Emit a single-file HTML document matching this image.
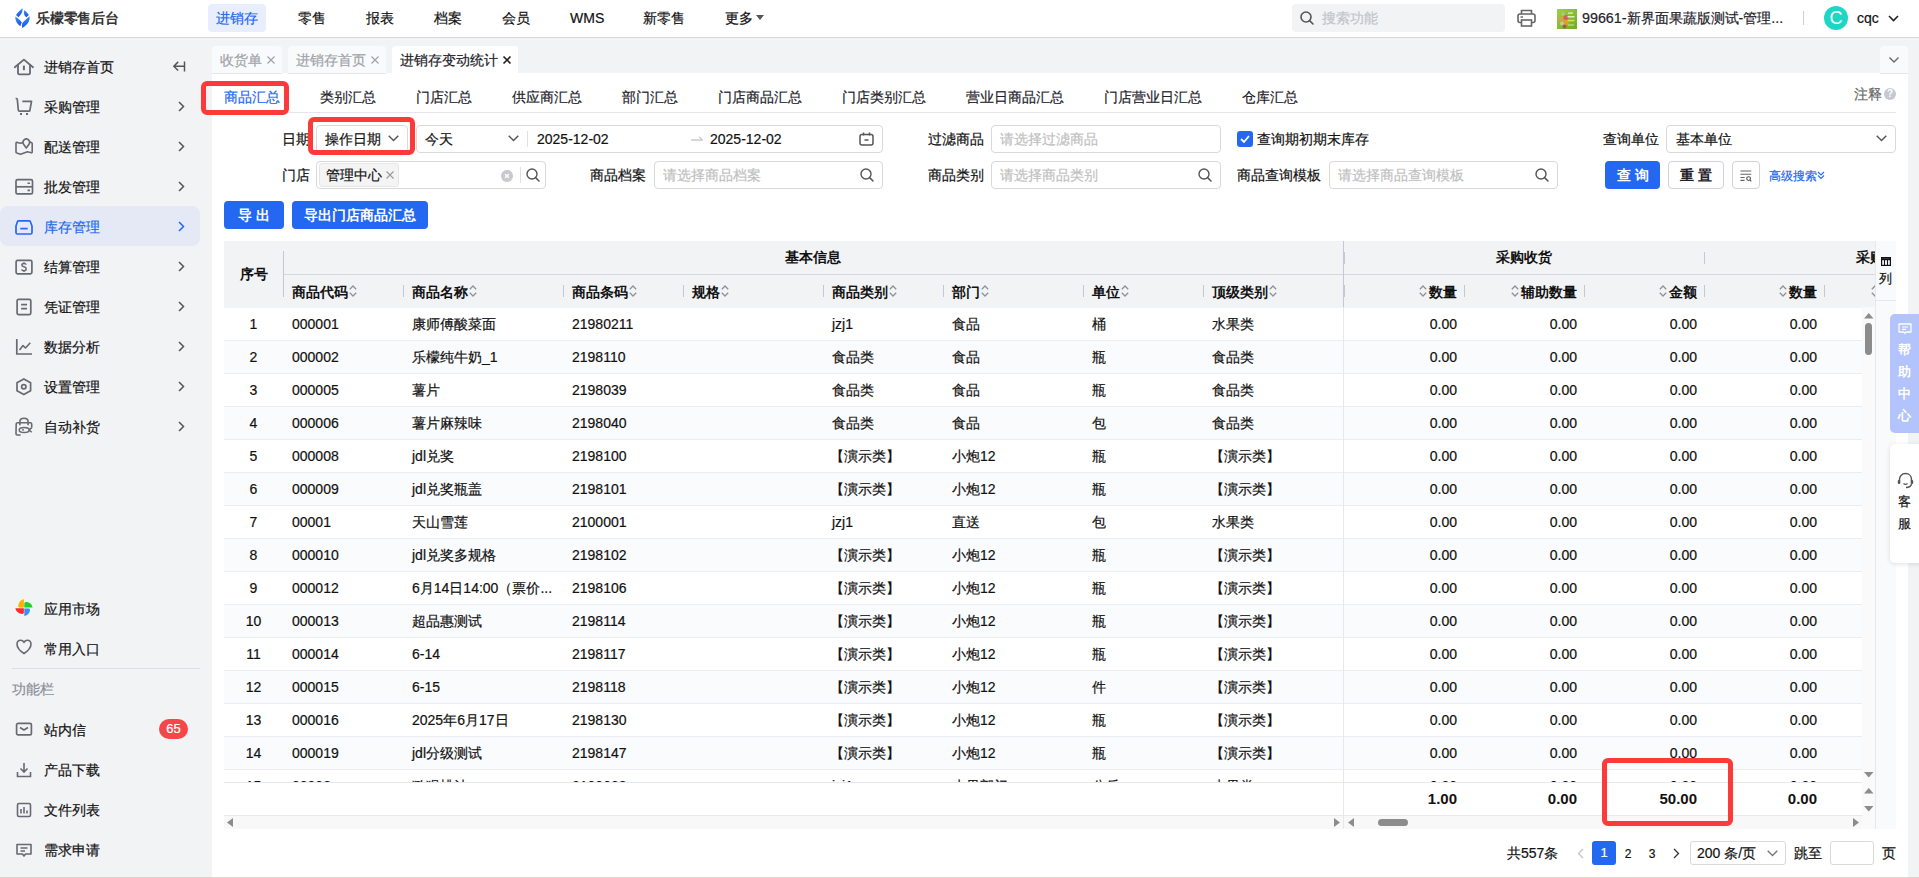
<!DOCTYPE html><html><head><meta charset="utf-8"><style>
*{box-sizing:border-box;margin:0;padding:0}
html,body{width:1919px;height:878px;overflow:hidden}
body{position:relative;background:#f2f3f5;font-family:"Liberation Sans",sans-serif;font-size:14px;color:#111;-webkit-text-stroke-width:0.2px}
.ab{position:absolute}
.t{position:absolute;white-space:nowrap;line-height:20px;height:20px}
svg{position:absolute;overflow:visible}
.ipt{position:absolute;height:28px;border:1px solid #d9d9d9;border-radius:4px;background:#fff}
.ph{color:#bfbfbf}
.row{position:absolute;left:0;height:33px;border-bottom:1px solid #ebeef2}
.th{font-weight:bold;color:#111;-webkit-text-stroke-width:0}
.sort{position:absolute;width:8px;height:12px}
.dv{position:absolute;width:1px;height:12px;background:#c5c8d2}
</style></head><body>
<div class="ab" style="left:0;top:0;width:1919px;height:38px;background:#fff;border-bottom:1px solid #d8d8d8"></div>
<svg style="left:15px;top:7.7px" width="15" height="21" viewBox="0 0 15 21">
<defs><linearGradient id="lg" x1="0" y1="0" x2="0.3" y2="1"><stop offset="0" stop-color="#3d93f9"/><stop offset="1" stop-color="#1657ef"/></linearGradient></defs>
<path d="M7.6 0.3C7.9 3.5 6.2 7 3.4 9.3L1 7C3 4.3 5.3 2.3 7.6 0.3Z" fill="url(#lg)"/>
<path d="M9.3 2.1C11 3.6 12.6 5.2 13.9 7L11.4 9.3C9.4 8 8.3 6 9.3 2.1Z" fill="url(#lg)"/>
<path d="M0.3 8.5C2.8 10.2 5.2 12.2 6.9 14.6C6 15.8 5.6 17 5.5 18.3C2.6 16.2 0.2 13.5 0.3 8.5Z" fill="url(#lg)"/>
<path d="M14.6 8.3C15.2 13.6 11.7 17.5 7.3 20.1C6.8 18.5 6.8 17 7.1 15.5C8.6 13.3 11.2 11.3 14.6 8.3Z" fill="url(#lg)"/>
</svg>
<div class="t" style="left:36px;top:8px;font-size:14px;font-weight:bold;-webkit-text-stroke-width:0;color:#333;letter-spacing:-0.2px">乐檬零售后台</div>
<div class="ab" style="left:208px;top:4px;width:58px;height:28px;border-radius:4px;background:#e8eefd"></div>
<div class="t" style="left:216px;top:8px;color:#2468f2">进销存</div>
<div class="t" style="left:298px;top:8px;color:#111">零售</div>
<div class="t" style="left:366px;top:8px;color:#111">报表</div>
<div class="t" style="left:434px;top:8px;color:#111">档案</div>
<div class="t" style="left:502px;top:8px;color:#111">会员</div>
<div class="t" style="left:570px;top:8px;color:#111">WMS</div>
<div class="t" style="left:643px;top:8px;color:#111">新零售</div>
<div class="t" style="left:725px;top:8px;color:#111">更多</div>
<svg style="left:756px;top:15px" width="8" height="5"><path d="M0 0H8L4 5Z" fill="#555"/></svg>
<div class="ab" style="left:1292px;top:4px;width:213px;height:28px;border-radius:4px;background:#f2f3f5"></div>
<svg style="left:1300px;top:11px" width="14" height="14" viewBox="0 0 14 14"><circle cx="6" cy="6" r="5" fill="none" stroke="#555" stroke-width="1.6"/><path d="M9.6 9.6L13 13" stroke="#555" stroke-width="1.6" stroke-linecap="round"/></svg>
<div class="t ph" style="left:1322px;top:8px;color:#c0c4cc">搜索功能</div>
<svg style="left:1517px;top:9px" width="19" height="18" viewBox="0 0 19 18"><path d="M4.5 5V1.5H14.5V5" fill="none" stroke="#666" stroke-width="1.6"/><rect x="1" y="5" width="17" height="8.5" rx="2" fill="none" stroke="#666" stroke-width="1.6"/><rect x="4.5" y="11" width="10" height="6" fill="#fff" stroke="#666" stroke-width="1.6"/><path d="M3.5 8H6" stroke="#666" stroke-width="1.4"/></svg>
<svg style="left:1557px;top:9px" width="20" height="20" viewBox="0 0 20 20"><defs><linearGradient id="sg" x1="0" y1="0" x2="1" y2="1"><stop offset="0" stop-color="#9fcf48"/><stop offset="1" stop-color="#6eaa2c"/></linearGradient><filter id="bl"><feGaussianBlur stdDeviation="0.6"/></filter><clipPath id="sc"><rect width="20" height="20"/></clipPath></defs><rect width="20" height="20" fill="url(#sg)"/>
<g clip-path="url(#sc)"><g filter="url(#bl)" opacity="0.9"><circle cx="4.5" cy="10" r="2.6" fill="#e0a040"/><circle cx="9" cy="8.5" r="2.6" fill="#d85a5a"/><circle cx="9" cy="13.5" r="2.8" fill="#eb9a2e"/><circle cx="5" cy="14.5" r="2" fill="#d8c8a0"/><circle cx="7.5" cy="17.5" r="2" fill="#a05a3a"/><circle cx="6" cy="5" r="1.8" fill="#b8c890"/>
<rect x="11" y="3.5" width="5" height="1.2" fill="#f0f8e0"/><rect x="10.5" y="7" width="7" height="1.5" fill="#e8f4d0"/><rect x="10.5" y="10.8" width="7" height="1.5" fill="#d8f040"/><rect x="11" y="15.5" width="6" height="1" fill="#d8ecb8"/></g></g></svg>
<div class="t" style="left:1582px;top:8px;color:#1d2129;font-size:14.3px">99661-新界面果蔬版测试-管理...</div>
<div class="ab" style="left:1803px;top:11px;width:1px;height:14px;background:#d0d0d0"></div>
<div class="ab" style="left:1824px;top:6px;width:24px;height:24px;border-radius:12px;background:#1ed6c6"></div>
<div class="t" style="left:1824px;top:6px;width:24px;height:24px;line-height:24px;text-align:center;color:#fff;font-size:18px;-webkit-text-stroke-width:0">C</div>
<div class="t" style="left:1857px;top:8px;font-size:14px;color:#111">cqc</div>
<svg style="left:1888px;top:15px" width="11" height="7"><path d="M1 1L5.5 5.5L10 1" fill="none" stroke="#222" stroke-width="1.6"/></svg>
<div class="ab" style="left:0;top:206px;width:200px;height:40px;border-radius:8px;background:#e5e9f5"></div>
<svg style="left:15px;top:58px" width="18" height="18" viewBox="0 0 18 18"><path d="M-0.2 9.2L8.9 1.6L18 9.2" fill="none" stroke="#666a73" stroke-width="1.8" stroke-linejoin="round" stroke-linecap="round"/><path d="M3 6.8V14.8Q3 16.4 4.6 16.4H13.4Q15 16.4 15 14.8V6.8" fill="none" stroke="#666a73" stroke-width="1.8"/><path d="M8.9 7.6V12.2" stroke="#666a73" stroke-width="2"/></svg>
<div class="t" style="left:44px;top:57px;color:#111">进销存首页</div>
<svg style="left:173px;top:60.5px" width="13" height="11" viewBox="0 0 13 11"><path d="M11.5 0.5V10.5" stroke="#555" stroke-width="1.5"/><path d="M0.8 5.2H11 M5.2 0.9L0.8 5.2L5.2 9.5" fill="none" stroke="#555" stroke-width="1.5" stroke-linejoin="round"/></svg>
<svg style="left:15px;top:98px" width="18" height="18" viewBox="0 0 18 18"><path d="M0.6 0.5H1.5Q2.2 0.5 2.3 1.3L3.3 12Q3.4 13.1 4.5 13.1H14Q14.8 13.1 14.9 12.3L16.5 3.4H7.3" fill="none" stroke="#666a73" stroke-width="1.7" stroke-linejoin="round"/><rect x="5" y="15" width="2" height="2" fill="#666a73"/><rect x="11" y="15" width="2" height="2" fill="#666a73"/></svg>
<div class="t" style="left:44px;top:97px;color:#111">采购管理</div>
<svg style="left:177.5px;top:101px" width="7" height="11" viewBox="0 0 7 11"><path d="M1 1L5.5 5.5L1 10" fill="none" stroke="#555" stroke-width="1.5"/></svg>
<svg style="left:15px;top:138px" width="18" height="18" viewBox="0 0 18 18"><path d="M8 4.6L5.5 5.3L2.3 4.4Q1 4.1 1 5.4V14Q1 14.8 1.8 15.1L5.5 16.2L12.5 13.8L16.2 14.7Q17.2 14.9 17.2 13.9V5.5Q17.2 4.7 16.3 4.4L14.8 4" fill="none" stroke="#666a73" stroke-width="1.6" stroke-linejoin="round"/><path d="M11.3 10L8.6 6.2A3.3 3.3 0 1 1 14 6.2Z" fill="none" stroke="#666a73" stroke-width="1.6" stroke-linejoin="round"/></svg>
<div class="t" style="left:44px;top:137px;color:#111">配送管理</div>
<svg style="left:177.5px;top:141px" width="7" height="11" viewBox="0 0 7 11"><path d="M1 1L5.5 5.5L1 10" fill="none" stroke="#555" stroke-width="1.5"/></svg>
<svg style="left:15px;top:178px" width="18" height="18" viewBox="0 0 18 18"><rect x="1" y="1.7" width="16.5" height="14.2" rx="1.5" fill="none" stroke="#666a73" stroke-width="1.7"/><path d="M1 8.8H17.5" stroke="#666a73" stroke-width="1.7"/><path d="M12.5 5.2H15 M12.5 12.4H15" stroke="#666a73" stroke-width="1.6"/></svg>
<div class="t" style="left:44px;top:177px;color:#111">批发管理</div>
<svg style="left:177.5px;top:181px" width="7" height="11" viewBox="0 0 7 11"><path d="M1 1L5.5 5.5L1 10" fill="none" stroke="#555" stroke-width="1.5"/></svg>
<svg style="left:15px;top:218px" width="18" height="18" viewBox="0 0 18 18"><path d="M3.6 2.8H14.2Q15 2.8 15.3 3.5L17 8V14.6Q17 16 15.6 16H2.4Q1 16 1 14.6V8L2.5 3.5Q2.8 2.8 3.6 2.8Z" fill="none" stroke="#2468f2" stroke-width="1.7" stroke-linejoin="round"/><path d="M5.3 10.6H12.7" stroke="#2468f2" stroke-width="1.7"/></svg>
<div class="t" style="left:44px;top:217px;color:#2468f2">库存管理</div>
<svg style="left:177.5px;top:221px" width="7" height="11" viewBox="0 0 7 11"><path d="M1 1L5.5 5.5L1 10" fill="none" stroke="#2468f2" stroke-width="1.5"/></svg>
<svg style="left:15px;top:258px" width="18" height="18" viewBox="0 0 18 18"><rect x="1.1" y="2.4" width="15.8" height="13.4" rx="1.5" fill="none" stroke="#666a73" stroke-width="1.7"/><path d="M11.2 6.6Q10.9 5.4 9 5.4Q6.9 5.4 6.9 6.9Q6.9 8.3 9 8.8Q11.2 9.4 11.2 11Q11.2 12.7 9 12.7Q6.9 12.7 6.7 11.4 M9 4.2V5.4 M9 12.7V14" fill="none" stroke="#666a73" stroke-width="1.5"/></svg>
<div class="t" style="left:44px;top:257px;color:#111">结算管理</div>
<svg style="left:177.5px;top:261px" width="7" height="11" viewBox="0 0 7 11"><path d="M1 1L5.5 5.5L1 10" fill="none" stroke="#555" stroke-width="1.5"/></svg>
<svg style="left:15px;top:298px" width="18" height="18" viewBox="0 0 18 18"><rect x="2.1" y="1.3" width="13.7" height="15.3" rx="1.5" fill="none" stroke="#666a73" stroke-width="1.7"/><path d="M6.1 6.6H12 M6.1 10.6H12" stroke="#666a73" stroke-width="1.7"/></svg>
<div class="t" style="left:44px;top:297px;color:#111">凭证管理</div>
<svg style="left:177.5px;top:301px" width="7" height="11" viewBox="0 0 7 11"><path d="M1 1L5.5 5.5L1 10" fill="none" stroke="#555" stroke-width="1.5"/></svg>
<svg style="left:15px;top:338px" width="18" height="18" viewBox="0 0 18 18"><path d="M1.8 1V16H17" fill="none" stroke="#666a73" stroke-width="1.7"/><path d="M4.5 12L8 7.6L10.5 10L15.3 4.8" fill="none" stroke="#666a73" stroke-width="1.6" stroke-linejoin="round"/></svg>
<div class="t" style="left:44px;top:337px;color:#111">数据分析</div>
<svg style="left:177.5px;top:341px" width="7" height="11" viewBox="0 0 7 11"><path d="M1 1L5.5 5.5L1 10" fill="none" stroke="#555" stroke-width="1.5"/></svg>
<svg style="left:15px;top:378px" width="18" height="18" viewBox="0 0 18 18"><path d="M8.8 0.9L15.6 4.8V12.7L8.8 16.6L2 12.7V4.8Z" fill="none" stroke="#666a73" stroke-width="1.7" stroke-linejoin="round"/><circle cx="8.8" cy="8.75" r="2.2" fill="none" stroke="#666a73" stroke-width="1.7"/></svg>
<div class="t" style="left:44px;top:377px;color:#111">设置管理</div>
<svg style="left:177.5px;top:381px" width="7" height="11" viewBox="0 0 7 11"><path d="M1 1L5.5 5.5L1 10" fill="none" stroke="#555" stroke-width="1.5"/></svg>
<svg style="left:15px;top:418px" width="18" height="18" viewBox="0 0 18 18"><path d="M4.9 7.3V3.6Q4.9 0.2 9 0.2Q13.1 0.2 13.1 3.6V7.3" fill="none" stroke="#666a73" stroke-width="1.6"/><path d="M5.6 17H2.2Q1 17 1 15.8L1.2 6Q1.2 4.7 2.5 4.7H15.3Q16.7 4.7 16.7 6V9.8" fill="none" stroke="#666a73" stroke-width="1.6" stroke-linejoin="round"/><ellipse cx="9.2" cy="11.9" rx="5" ry="2.5" fill="none" stroke="#666a73" stroke-width="1.5"/><path d="M14 11.9L16.7 9.8 M14 11.9L16.7 14.2" stroke="#666a73" stroke-width="1.5"/><path d="M8 11V12.8" stroke="#666a73" stroke-width="1.5"/></svg>
<div class="t" style="left:44px;top:417px;color:#111">自动补货</div>
<svg style="left:177.5px;top:421px" width="7" height="11" viewBox="0 0 7 11"><path d="M1 1L5.5 5.5L1 10" fill="none" stroke="#555" stroke-width="1.5"/></svg>
<svg style="left:15px;top:598px" width="18" height="19" viewBox="0 0 18 19">
<path d="M8.9 9.6L8.9 1.2C5.8 1.8 3.3 4.6 3.3 8C3.3 9 3.9 9.6 4.9 9.6Z" fill="#ffb000"/>
<path d="M9.3 9.6L17.6 9.6C17.1 6.5 14.5 4 11 4.1C10 4.1 9.3 4.8 9.3 6Z" fill="#22d32a"/>
<path d="M9.3 10.4L9.3 18.1C12.2 17.6 15 15 15 11.5C15 10.8 14.4 10.4 13.6 10.4Z" fill="#3592fb"/>
<path d="M8.9 10.2L0.4 10.2C1 13.5 4 15.9 7.5 15.9C8.5 15.9 8.9 15.1 8.9 14.1Z" fill="#ff2929"/>
</svg>
<div class="t" style="left:44px;top:599px">应用市场</div>
<svg style="left:15px;top:638px" width="18" height="18" viewBox="0 0 18 18"><path d="M9 15.5C9 15.5 2 11 2 6.3C2 3.8 3.8 2.3 5.8 2.3C7.3 2.3 8.4 3.2 9 4.3C9.6 3.2 10.7 2.3 12.2 2.3C14.2 2.3 16 3.8 16 6.3C16 11 9 15.5 9 15.5Z" fill="none" stroke="#666a73" stroke-width="1.6" stroke-linejoin="round"/></svg>
<div class="t" style="left:44px;top:639px">常用入口</div>
<div class="ab" style="left:12px;top:668px;width:188px;height:1px;background:#dcdee3"></div>
<div class="t" style="left:12px;top:679px;color:#8a8e99">功能栏</div>
<svg style="left:15px;top:720.5px" width="18" height="18" viewBox="0 0 18 18"><rect x="1.6" y="2.3" width="14.8" height="11.6" rx="1.5" fill="none" stroke="#666a73" stroke-width="1.7"/><path d="M5 6.5L9 9L13 6.5" fill="none" stroke="#666a73" stroke-width="1.7"/></svg>
<div class="t" style="left:44px;top:720px">站内信</div>
<svg style="left:15px;top:760.5px" width="18" height="18" viewBox="0 0 18 18"><path d="M9 2V11 M5.5 7.5L9 11L12.5 7.5" fill="none" stroke="#666a73" stroke-width="1.6"/><path d="M2.5 11V15.5H15.5V11" fill="none" stroke="#666a73" stroke-width="1.6"/></svg>
<div class="t" style="left:44px;top:760px">产品下载</div>
<svg style="left:15px;top:800.5px" width="18" height="18" viewBox="0 0 18 18"><rect x="2.5" y="2.5" width="13" height="13" rx="1.5" fill="none" stroke="#666a73" stroke-width="1.6"/><path d="M6 8V12.5 M9 6V12.5 M12 9.5V12.5" stroke="#666a73" stroke-width="1.6"/></svg>
<div class="t" style="left:44px;top:800px">文件列表</div>
<svg style="left:15px;top:840.5px" width="18" height="18" viewBox="0 0 18 18"><path d="M2 3.5H16V13H10.5L9 15L7.5 13H2Z" fill="none" stroke="#666a73" stroke-width="1.6" stroke-linejoin="round"/><path d="M5.5 7H12.5 M5.5 10H10" stroke="#666a73" stroke-width="1.6"/></svg>
<div class="t" style="left:44px;top:840px">需求申请</div>
<div class="ab" style="left:159px;top:719px;width:29px;height:20px;border-radius:10px;background:#f5474a;color:#fff;font-size:13px;line-height:20px;text-align:center">65</div>
<div class="ab" style="left:212px;top:73px;width:1696px;height:804px;background:#fff"></div>
<div class="ab" style="left:212px;top:46px;width:70px;height:28px;background:#f9fafb;border-radius:4px 4px 0 0;border-bottom:1px solid #e5e6eb;"></div>
<div class="t" style="left:220px;top:50px;color:#a0a3aa">收货单</div>
<svg style="left:267px;top:56px" width="8" height="8" viewBox="0 0 8 8"><path d="M0.5 0.5L7.5 7.5M7.5 0.5L0.5 7.5" stroke="#a0a3aa" stroke-width="1.2"/></svg>
<div class="ab" style="left:288px;top:46px;width:98px;height:28px;background:#f9fafb;border-radius:4px 4px 0 0;border-bottom:1px solid #e5e6eb;"></div>
<div class="t" style="left:296px;top:50px;color:#a0a3aa">进销存首页</div>
<svg style="left:371px;top:56px" width="8" height="8" viewBox="0 0 8 8"><path d="M0.5 0.5L7.5 7.5M7.5 0.5L0.5 7.5" stroke="#a0a3aa" stroke-width="1.2"/></svg>
<div class="ab" style="left:392px;top:46px;width:126px;height:28px;background:#fff;border-radius:4px 4px 0 0;"></div>
<div class="t" style="left:400px;top:50px;color:#1d2129">进销存变动统计</div>
<svg style="left:503px;top:56px" width="8" height="8" viewBox="0 0 8 8"><path d="M0.5 0.5L7.5 7.5M7.5 0.5L0.5 7.5" stroke="#222" stroke-width="1.6"/></svg>
<div class="ab" style="left:1880px;top:46px;width:28px;height:28px;background:#f9fafb;border-radius:4px 4px 0 0;border-bottom:1px solid #e5e6eb"></div>
<svg style="left:1889px;top:57px" width="10" height="6"><path d="M0.5 0.5L5 5L9.5 0.5" fill="none" stroke="#666" stroke-width="1.3"/></svg>
<div class="ab" style="left:0;top:877px;width:1919px;height:1px;background:#dcd6cf"></div>
<div class="ab" style="left:224px;top:112px;width:1672px;height:1px;background:#e5e6eb"></div>
<div class="t" style="left:224px;top:87px;color:#2468f2">商品汇总</div>
<div class="t" style="left:320px;top:87px;color:#1d2129">类别汇总</div>
<div class="t" style="left:416px;top:87px;color:#1d2129">门店汇总</div>
<div class="t" style="left:512px;top:87px;color:#1d2129">供应商汇总</div>
<div class="t" style="left:622px;top:87px;color:#1d2129">部门汇总</div>
<div class="t" style="left:718px;top:87px;color:#1d2129">门店商品汇总</div>
<div class="t" style="left:842px;top:87px;color:#1d2129">门店类别汇总</div>
<div class="t" style="left:966px;top:87px;color:#1d2129">营业日商品汇总</div>
<div class="t" style="left:1104px;top:87px;color:#1d2129">门店营业日汇总</div>
<div class="t" style="left:1242px;top:87px;color:#1d2129">仓库汇总</div>
<div class="t" style="left:1854px;top:84px;color:#666">注释</div>
<div class="ab" style="left:1884px;top:88px;width:12px;height:12px;border-radius:6px;background:#c5c8d0;color:#fff;font-size:10px;line-height:12px;text-align:center;font-weight:bold;-webkit-text-stroke-width:0">?</div>
<div class="t" style="left:282px;top:129px">日期</div>
<div class="ipt" style="left:316px;top:125px;width:92px"></div>
<div class="t" style="left:325px;top:129px">操作日期</div>
<svg style="left:388px;top:135px" width="11" height="7" viewBox="0 0 11 7"><path d="M0.7 0.7L5.5 5.5L10.3 0.7" fill="none" stroke="#555" stroke-width="1.4"/></svg>
<div class="ipt" style="left:416px;top:125px;width:467px"></div>
<div class="t" style="left:425px;top:129px">今天</div>
<svg style="left:508px;top:135px" width="11" height="7" viewBox="0 0 11 7"><path d="M0.7 0.7L5.5 5.5L10.3 0.7" fill="none" stroke="#555" stroke-width="1.4"/></svg>
<div class="ab" style="left:527px;top:131px;width:1px;height:16px;background:#e0e0e0"></div>
<div class="t" style="left:537px;top:129px">2025-12-02</div>
<svg style="left:691px;top:136px" width="12" height="5"><path d="M0 4H11.5L8 0.8" fill="none" stroke="#b0b0b0" stroke-width="1"/></svg>
<div class="t" style="left:710px;top:129px">2025-12-02</div>
<svg style="left:859px;top:132px" width="15" height="14" viewBox="0 0 15 14"><rect x="1" y="2.5" width="13" height="10.5" rx="2" fill="none" stroke="#555" stroke-width="1.5"/><path d="M4.5 0.5V3.5 M10.5 0.5V3.5 M5.5 8H9.5" stroke="#555" stroke-width="1.5"/></svg>
<div class="t" style="left:928px;top:129px">过滤商品</div>
<div class="ipt" style="left:991px;top:125px;width:230px"></div>
<div class="t ph" style="left:1000px;top:129px">请选择过滤商品</div>
<div class="ab" style="left:1237px;top:131px;width:16px;height:16px;border-radius:3px;background:#2468f2"></div>
<svg style="left:1240px;top:135px" width="10" height="8" viewBox="0 0 10 8"><path d="M1 4L4 7L9 1" fill="none" stroke="#fff" stroke-width="1.8"/></svg>
<div class="t" style="left:1257px;top:129px">查询期初期末库存</div>
<div class="t" style="left:1603px;top:129px">查询单位</div>
<div class="ipt" style="left:1666px;top:125px;width:230px"></div>
<div class="t" style="left:1676px;top:129px">基本单位</div>
<svg style="left:1876px;top:135px" width="11" height="7" viewBox="0 0 11 7"><path d="M0.7 0.7L5.5 5.5L10.3 0.7" fill="none" stroke="#555" stroke-width="1.4"/></svg>
<div class="t" style="left:282px;top:165px">门店</div>
<div class="ipt" style="left:316px;top:161px;width:230px"></div>
<div class="ab" style="left:319px;top:163px;width:80px;height:24px;border-radius:3px;background:#f4f4f5;border:1px solid #e6e6e8"></div>
<div class="t" style="left:326px;top:165px">管理中心</div>
<svg style="left:386px;top:171px" width="8" height="8" viewBox="0 0 8 8"><path d="M0.5 0.5L7.5 7.5M7.5 0.5L0.5 7.5" stroke="#999" stroke-width="1.1"/></svg>
<svg style="left:501px;top:170px" width="12" height="12" viewBox="0 0 12 12"><circle cx="6" cy="6" r="6" fill="#c8c9cc"/><path d="M4 4L8 8M8 4L4 8" stroke="#fff" stroke-width="1.2"/></svg>
<div class="ab" style="left:520px;top:167px;width:1px;height:16px;background:#e0e0e0"></div>
<svg style="left:526px;top:168px" width="14" height="14" viewBox="0 0 14 14"><circle cx="6" cy="6" r="5" fill="none" stroke="#555" stroke-width="1.4"/><path d="M9.6 9.6L13 13" stroke="#555" stroke-width="1.5" stroke-linecap="round"/></svg>
<div class="t" style="left:590px;top:165px">商品档案</div>
<div class="ipt" style="left:654px;top:161px;width:229px"></div>
<div class="t ph" style="left:663px;top:165px">请选择商品档案</div>
<svg style="left:860px;top:168px" width="14" height="14" viewBox="0 0 14 14"><circle cx="6" cy="6" r="5" fill="none" stroke="#555" stroke-width="1.4"/><path d="M9.6 9.6L13 13" stroke="#555" stroke-width="1.5" stroke-linecap="round"/></svg>
<div class="t" style="left:928px;top:165px">商品类别</div>
<div class="ipt" style="left:991px;top:161px;width:230px"></div>
<div class="t ph" style="left:1000px;top:165px">请选择商品类别</div>
<svg style="left:1198px;top:168px" width="14" height="14" viewBox="0 0 14 14"><circle cx="6" cy="6" r="5" fill="none" stroke="#555" stroke-width="1.4"/><path d="M9.6 9.6L13 13" stroke="#555" stroke-width="1.5" stroke-linecap="round"/></svg>
<div class="t" style="left:1237px;top:165px">商品查询模板</div>
<div class="ipt" style="left:1329px;top:161px;width:229px"></div>
<div class="t ph" style="left:1338px;top:165px">请选择商品查询模板</div>
<svg style="left:1535px;top:168px" width="14" height="14" viewBox="0 0 14 14"><circle cx="6" cy="6" r="5" fill="none" stroke="#555" stroke-width="1.4"/><path d="M9.6 9.6L13 13" stroke="#555" stroke-width="1.5" stroke-linecap="round"/></svg>
<div class="ab" style="left:1605px;top:161px;width:55px;height:28px;border-radius:4px;background:#2468f2"></div>
<div class="t" style="left:1605px;top:165px;width:55px;text-align:center;color:#fff;font-weight:bold;-webkit-text-stroke-width:0;letter-spacing:4px;padding-left:4px">查询</div>
<div class="ab" style="left:1668px;top:161px;width:56px;height:28px;border-radius:4px;background:#fff;border:1px solid #d0d3d9"></div>
<div class="t" style="left:1668px;top:165px;width:56px;text-align:center;color:#1d2129;font-weight:bold;-webkit-text-stroke-width:0;letter-spacing:4px;padding-left:4px">重置</div>
<div class="ab" style="left:1732px;top:161px;width:28px;height:28px;border-radius:4px;background:#fff;border:1px solid #d0d3d9"></div>
<svg style="left:1740px;top:170px" width="12" height="12" viewBox="0 0 12 12"><path d="M0.4 1H11.3 M0.4 4.3H11.3 M0.4 7.5H4.6 M0.4 10.4H4.6" stroke="#666" stroke-width="1.1"/><circle cx="8.6" cy="8.6" r="1.9" fill="none" stroke="#555" stroke-width="1.1"/><path d="M10 10L11.3 11.3" stroke="#555" stroke-width="1.1"/></svg>
<div class="t" style="left:1769px;top:166px;font-size:12px;color:#2468f2">高级搜索</div>
<svg style="left:1817px;top:171px" width="8" height="9" viewBox="0 0 8 9"><path d="M1 1L4 4L7 1 M1 4.5L4 7.5L7 4.5" fill="none" stroke="#2468f2" stroke-width="1.1"/></svg>
<div class="ab" style="left:224px;top:201px;width:60px;height:28px;border-radius:4px;background:#2468f2"></div>
<div class="t" style="left:224px;top:205px;width:60px;text-align:center;color:#fff;font-weight:bold;-webkit-text-stroke-width:0;letter-spacing:4px;padding-left:4px">导出</div>
<div class="ab" style="left:292px;top:201px;width:136px;height:28px;border-radius:4px;background:#2468f2"></div>
<div class="t" style="left:292px;top:205px;width:136px;text-align:center;color:#fff;font-weight:bold;-webkit-text-stroke-width:0">导出门店商品汇总</div>
<div class="ab" style="left:201px;top:81px;width:88px;height:34px;border:5px solid #fd3a3a;border-radius:6px"></div>
<div class="ab" style="left:308px;top:117px;width:107px;height:38px;border:5px solid #fd3a3a;border-radius:6px"></div>
<div class="ab" style="left:224px;top:241px;width:1651px;height:67px;background:#f2f3f5"></div>
<div class="t th" style="left:224px;top:264px;width:59px;text-align:center">序号</div>
<div class="ab" style="left:283px;top:251px;width:1px;height:46px;background:#c5c8d2"></div>
<div class="ab" style="left:284px;top:274px;width:1591px;height:1px;background:#d5d8df"></div>
<div class="t th" style="left:283px;top:247px;width:1060px;text-align:center">基本信息</div>
<div class="t th" style="left:292px;top:282px">商品代码<span style="display:inline-block;width:12px"></span></div>
<div class="t th" style="left:412px;top:282px">商品名称<span style="display:inline-block;width:12px"></span></div>
<div class="t th" style="left:572px;top:282px">商品条码<span style="display:inline-block;width:12px"></span></div>
<div class="t th" style="left:692px;top:282px">规格<span style="display:inline-block;width:12px"></span></div>
<div class="t th" style="left:832px;top:282px">商品类别<span style="display:inline-block;width:12px"></span></div>
<div class="t th" style="left:952px;top:282px">部门<span style="display:inline-block;width:12px"></span></div>
<div class="t th" style="left:1092px;top:282px">单位<span style="display:inline-block;width:12px"></span></div>
<div class="t th" style="left:1212px;top:282px">顶级类别<span style="display:inline-block;width:12px"></span></div>
<svg style="left:349px;top:285px" width="8" height="12" viewBox="0 0 8 12"><path d="M0.8 4.3L4 1L7.2 4.3 M0.8 7.7L4 11L7.2 7.7" fill="none" stroke="#8e9199" stroke-width="1.3"/></svg>
<svg style="left:469px;top:285px" width="8" height="12" viewBox="0 0 8 12"><path d="M0.8 4.3L4 1L7.2 4.3 M0.8 7.7L4 11L7.2 7.7" fill="none" stroke="#8e9199" stroke-width="1.3"/></svg>
<svg style="left:629px;top:285px" width="8" height="12" viewBox="0 0 8 12"><path d="M0.8 4.3L4 1L7.2 4.3 M0.8 7.7L4 11L7.2 7.7" fill="none" stroke="#8e9199" stroke-width="1.3"/></svg>
<svg style="left:721px;top:285px" width="8" height="12" viewBox="0 0 8 12"><path d="M0.8 4.3L4 1L7.2 4.3 M0.8 7.7L4 11L7.2 7.7" fill="none" stroke="#8e9199" stroke-width="1.3"/></svg>
<svg style="left:889px;top:285px" width="8" height="12" viewBox="0 0 8 12"><path d="M0.8 4.3L4 1L7.2 4.3 M0.8 7.7L4 11L7.2 7.7" fill="none" stroke="#8e9199" stroke-width="1.3"/></svg>
<svg style="left:981px;top:285px" width="8" height="12" viewBox="0 0 8 12"><path d="M0.8 4.3L4 1L7.2 4.3 M0.8 7.7L4 11L7.2 7.7" fill="none" stroke="#8e9199" stroke-width="1.3"/></svg>
<svg style="left:1121px;top:285px" width="8" height="12" viewBox="0 0 8 12"><path d="M0.8 4.3L4 1L7.2 4.3 M0.8 7.7L4 11L7.2 7.7" fill="none" stroke="#8e9199" stroke-width="1.3"/></svg>
<svg style="left:1269px;top:285px" width="8" height="12" viewBox="0 0 8 12"><path d="M0.8 4.3L4 1L7.2 4.3 M0.8 7.7L4 11L7.2 7.7" fill="none" stroke="#8e9199" stroke-width="1.3"/></svg>
<div class="dv" style="left:403px;top:285px"></div>
<div class="dv" style="left:563px;top:285px"></div>
<div class="dv" style="left:683px;top:285px"></div>
<div class="dv" style="left:823px;top:285px"></div>
<div class="dv" style="left:943px;top:285px"></div>
<div class="dv" style="left:1083px;top:285px"></div>
<div class="dv" style="left:1203px;top:285px"></div>
<div class="ab" style="left:1343px;top:241px;width:1px;height:66px;background:#c5c8d2"></div>
<div class="ab" style="left:1343px;top:307px;width:1px;height:522px;background:#e6e8eb"></div>
<div class="dv" style="left:1344px;top:252px;width:1px"></div>
<div class="dv" style="left:1344px;top:285px"></div>
<div class="ab" style="left:1344px;top:241px;width:531px;height:66px;overflow:hidden">
<div class="t th" style="left:0;top:6px;width:360px;text-align:center">采购收货</div>
<div class="dv" style="left:360px;top:11px"></div>
<div class="t th" style="left:360px;top:6px;width:360px;text-align:center">采购退货</div>
<div class="t th" style="left:85px;top:41px">数量</div>
<svg style="left:75px;top:44px" width="8" height="12" viewBox="0 0 8 12"><path d="M0.8 4.3L4 1L7.2 4.3 M0.8 7.7L4 11L7.2 7.7" fill="none" stroke="#8e9199" stroke-width="1.3"/></svg>
<div class="dv" style="left:120px;top:44px"></div>
<div class="t th" style="left:177px;top:41px">辅助数量</div>
<svg style="left:167px;top:44px" width="8" height="12" viewBox="0 0 8 12"><path d="M0.8 4.3L4 1L7.2 4.3 M0.8 7.7L4 11L7.2 7.7" fill="none" stroke="#8e9199" stroke-width="1.3"/></svg>
<div class="dv" style="left:240px;top:44px"></div>
<div class="t th" style="left:325px;top:41px">金额</div>
<svg style="left:315px;top:44px" width="8" height="12" viewBox="0 0 8 12"><path d="M0.8 4.3L4 1L7.2 4.3 M0.8 7.7L4 11L7.2 7.7" fill="none" stroke="#8e9199" stroke-width="1.3"/></svg>
<div class="dv" style="left:360px;top:44px"></div>
<div class="t th" style="left:445px;top:41px">数量</div>
<svg style="left:435px;top:44px" width="8" height="12" viewBox="0 0 8 12"><path d="M0.8 4.3L4 1L7.2 4.3 M0.8 7.7L4 11L7.2 7.7" fill="none" stroke="#8e9199" stroke-width="1.3"/></svg>
<div class="dv" style="left:480px;top:44px"></div>
<div class="t th" style="left:537px;top:41px">辅助数量</div>
<svg style="left:527px;top:44px" width="8" height="12" viewBox="0 0 8 12"><path d="M0.8 4.3L4 1L7.2 4.3 M0.8 7.7L4 11L7.2 7.7" fill="none" stroke="#8e9199" stroke-width="1.3"/></svg>
<div class="dv" style="left:600px;top:44px"></div>
</div>
<div class="ab" style="left:224px;top:308px;width:1638px;height:474px;overflow:hidden">
<div class="ab" style="left:0;top:0px;width:1119px;height:33px;background:#fff;border-bottom:1px solid #ebedf0"></div>
<div class="ab" style="left:1120px;top:0px;width:518px;height:33px;background:#fff;border-bottom:1px solid #ebedf0"></div>
<div class="t" style="left:0;top:6px;width:59px;text-align:center">1</div>
<div class="t" style="left:68px;top:6px">000001</div>
<div class="t" style="left:188px;top:6px">康师傅酸菜面</div>
<div class="t" style="left:348px;top:6px">21980211</div>
<div class="t" style="left:608px;top:6px">jzj1</div>
<div class="t" style="left:728px;top:6px">食品</div>
<div class="t" style="left:868px;top:6px">桶</div>
<div class="t" style="left:988px;top:6px">水果类</div>
<div class="t" style="left:1173px;top:6px;width:60px;text-align:right">0.00</div>
<div class="t" style="left:1293px;top:6px;width:60px;text-align:right">0.00</div>
<div class="t" style="left:1413px;top:6px;width:60px;text-align:right">0.00</div>
<div class="t" style="left:1533px;top:6px;width:60px;text-align:right">0.00</div>
<div class="t" style="left:1653px;top:6px;width:60px;text-align:right">0.00</div>
<div class="ab" style="left:0;top:33px;width:1119px;height:33px;background:#fafbfc;border-bottom:1px solid #ebedf0"></div>
<div class="ab" style="left:1120px;top:33px;width:518px;height:33px;background:#fafbfc;border-bottom:1px solid #ebedf0"></div>
<div class="t" style="left:0;top:39px;width:59px;text-align:center">2</div>
<div class="t" style="left:68px;top:39px">000002</div>
<div class="t" style="left:188px;top:39px">乐檬纯牛奶_1</div>
<div class="t" style="left:348px;top:39px">2198110</div>
<div class="t" style="left:608px;top:39px">食品类</div>
<div class="t" style="left:728px;top:39px">食品</div>
<div class="t" style="left:868px;top:39px">瓶</div>
<div class="t" style="left:988px;top:39px">食品类</div>
<div class="t" style="left:1173px;top:39px;width:60px;text-align:right">0.00</div>
<div class="t" style="left:1293px;top:39px;width:60px;text-align:right">0.00</div>
<div class="t" style="left:1413px;top:39px;width:60px;text-align:right">0.00</div>
<div class="t" style="left:1533px;top:39px;width:60px;text-align:right">0.00</div>
<div class="t" style="left:1653px;top:39px;width:60px;text-align:right">0.00</div>
<div class="ab" style="left:0;top:66px;width:1119px;height:33px;background:#fff;border-bottom:1px solid #ebedf0"></div>
<div class="ab" style="left:1120px;top:66px;width:518px;height:33px;background:#fff;border-bottom:1px solid #ebedf0"></div>
<div class="t" style="left:0;top:72px;width:59px;text-align:center">3</div>
<div class="t" style="left:68px;top:72px">000005</div>
<div class="t" style="left:188px;top:72px">薯片</div>
<div class="t" style="left:348px;top:72px">2198039</div>
<div class="t" style="left:608px;top:72px">食品类</div>
<div class="t" style="left:728px;top:72px">食品</div>
<div class="t" style="left:868px;top:72px">瓶</div>
<div class="t" style="left:988px;top:72px">食品类</div>
<div class="t" style="left:1173px;top:72px;width:60px;text-align:right">0.00</div>
<div class="t" style="left:1293px;top:72px;width:60px;text-align:right">0.00</div>
<div class="t" style="left:1413px;top:72px;width:60px;text-align:right">0.00</div>
<div class="t" style="left:1533px;top:72px;width:60px;text-align:right">0.00</div>
<div class="t" style="left:1653px;top:72px;width:60px;text-align:right">0.00</div>
<div class="ab" style="left:0;top:99px;width:1119px;height:33px;background:#fafbfc;border-bottom:1px solid #ebedf0"></div>
<div class="ab" style="left:1120px;top:99px;width:518px;height:33px;background:#fafbfc;border-bottom:1px solid #ebedf0"></div>
<div class="t" style="left:0;top:105px;width:59px;text-align:center">4</div>
<div class="t" style="left:68px;top:105px">000006</div>
<div class="t" style="left:188px;top:105px">薯片麻辣味</div>
<div class="t" style="left:348px;top:105px">2198040</div>
<div class="t" style="left:608px;top:105px">食品类</div>
<div class="t" style="left:728px;top:105px">食品</div>
<div class="t" style="left:868px;top:105px">包</div>
<div class="t" style="left:988px;top:105px">食品类</div>
<div class="t" style="left:1173px;top:105px;width:60px;text-align:right">0.00</div>
<div class="t" style="left:1293px;top:105px;width:60px;text-align:right">0.00</div>
<div class="t" style="left:1413px;top:105px;width:60px;text-align:right">0.00</div>
<div class="t" style="left:1533px;top:105px;width:60px;text-align:right">0.00</div>
<div class="t" style="left:1653px;top:105px;width:60px;text-align:right">0.00</div>
<div class="ab" style="left:0;top:132px;width:1119px;height:33px;background:#fff;border-bottom:1px solid #ebedf0"></div>
<div class="ab" style="left:1120px;top:132px;width:518px;height:33px;background:#fff;border-bottom:1px solid #ebedf0"></div>
<div class="t" style="left:0;top:138px;width:59px;text-align:center">5</div>
<div class="t" style="left:68px;top:138px">000008</div>
<div class="t" style="left:188px;top:138px">jdl兑奖</div>
<div class="t" style="left:348px;top:138px">2198100</div>
<div class="t" style="left:606px;top:138px">【演示类】</div>
<div class="t" style="left:728px;top:138px">小炮12</div>
<div class="t" style="left:868px;top:138px">瓶</div>
<div class="t" style="left:986px;top:138px">【演示类】</div>
<div class="t" style="left:1173px;top:138px;width:60px;text-align:right">0.00</div>
<div class="t" style="left:1293px;top:138px;width:60px;text-align:right">0.00</div>
<div class="t" style="left:1413px;top:138px;width:60px;text-align:right">0.00</div>
<div class="t" style="left:1533px;top:138px;width:60px;text-align:right">0.00</div>
<div class="t" style="left:1653px;top:138px;width:60px;text-align:right">0.00</div>
<div class="ab" style="left:0;top:165px;width:1119px;height:33px;background:#fafbfc;border-bottom:1px solid #ebedf0"></div>
<div class="ab" style="left:1120px;top:165px;width:518px;height:33px;background:#fafbfc;border-bottom:1px solid #ebedf0"></div>
<div class="t" style="left:0;top:171px;width:59px;text-align:center">6</div>
<div class="t" style="left:68px;top:171px">000009</div>
<div class="t" style="left:188px;top:171px">jdl兑奖瓶盖</div>
<div class="t" style="left:348px;top:171px">2198101</div>
<div class="t" style="left:606px;top:171px">【演示类】</div>
<div class="t" style="left:728px;top:171px">小炮12</div>
<div class="t" style="left:868px;top:171px">瓶</div>
<div class="t" style="left:986px;top:171px">【演示类】</div>
<div class="t" style="left:1173px;top:171px;width:60px;text-align:right">0.00</div>
<div class="t" style="left:1293px;top:171px;width:60px;text-align:right">0.00</div>
<div class="t" style="left:1413px;top:171px;width:60px;text-align:right">0.00</div>
<div class="t" style="left:1533px;top:171px;width:60px;text-align:right">0.00</div>
<div class="t" style="left:1653px;top:171px;width:60px;text-align:right">0.00</div>
<div class="ab" style="left:0;top:198px;width:1119px;height:33px;background:#fff;border-bottom:1px solid #ebedf0"></div>
<div class="ab" style="left:1120px;top:198px;width:518px;height:33px;background:#fff;border-bottom:1px solid #ebedf0"></div>
<div class="t" style="left:0;top:204px;width:59px;text-align:center">7</div>
<div class="t" style="left:68px;top:204px">00001</div>
<div class="t" style="left:188px;top:204px">天山雪莲</div>
<div class="t" style="left:348px;top:204px">2100001</div>
<div class="t" style="left:608px;top:204px">jzj1</div>
<div class="t" style="left:728px;top:204px">直送</div>
<div class="t" style="left:868px;top:204px">包</div>
<div class="t" style="left:988px;top:204px">水果类</div>
<div class="t" style="left:1173px;top:204px;width:60px;text-align:right">0.00</div>
<div class="t" style="left:1293px;top:204px;width:60px;text-align:right">0.00</div>
<div class="t" style="left:1413px;top:204px;width:60px;text-align:right">0.00</div>
<div class="t" style="left:1533px;top:204px;width:60px;text-align:right">0.00</div>
<div class="t" style="left:1653px;top:204px;width:60px;text-align:right">0.00</div>
<div class="ab" style="left:0;top:231px;width:1119px;height:33px;background:#fafbfc;border-bottom:1px solid #ebedf0"></div>
<div class="ab" style="left:1120px;top:231px;width:518px;height:33px;background:#fafbfc;border-bottom:1px solid #ebedf0"></div>
<div class="t" style="left:0;top:237px;width:59px;text-align:center">8</div>
<div class="t" style="left:68px;top:237px">000010</div>
<div class="t" style="left:188px;top:237px">jdl兑奖多规格</div>
<div class="t" style="left:348px;top:237px">2198102</div>
<div class="t" style="left:606px;top:237px">【演示类】</div>
<div class="t" style="left:728px;top:237px">小炮12</div>
<div class="t" style="left:868px;top:237px">瓶</div>
<div class="t" style="left:986px;top:237px">【演示类】</div>
<div class="t" style="left:1173px;top:237px;width:60px;text-align:right">0.00</div>
<div class="t" style="left:1293px;top:237px;width:60px;text-align:right">0.00</div>
<div class="t" style="left:1413px;top:237px;width:60px;text-align:right">0.00</div>
<div class="t" style="left:1533px;top:237px;width:60px;text-align:right">0.00</div>
<div class="t" style="left:1653px;top:237px;width:60px;text-align:right">0.00</div>
<div class="ab" style="left:0;top:264px;width:1119px;height:33px;background:#fff;border-bottom:1px solid #ebedf0"></div>
<div class="ab" style="left:1120px;top:264px;width:518px;height:33px;background:#fff;border-bottom:1px solid #ebedf0"></div>
<div class="t" style="left:0;top:270px;width:59px;text-align:center">9</div>
<div class="t" style="left:68px;top:270px">000012</div>
<div class="t" style="left:188px;top:270px">6月14日14:00（票价...</div>
<div class="t" style="left:348px;top:270px">2198106</div>
<div class="t" style="left:606px;top:270px">【演示类】</div>
<div class="t" style="left:728px;top:270px">小炮12</div>
<div class="t" style="left:868px;top:270px">瓶</div>
<div class="t" style="left:986px;top:270px">【演示类】</div>
<div class="t" style="left:1173px;top:270px;width:60px;text-align:right">0.00</div>
<div class="t" style="left:1293px;top:270px;width:60px;text-align:right">0.00</div>
<div class="t" style="left:1413px;top:270px;width:60px;text-align:right">0.00</div>
<div class="t" style="left:1533px;top:270px;width:60px;text-align:right">0.00</div>
<div class="t" style="left:1653px;top:270px;width:60px;text-align:right">0.00</div>
<div class="ab" style="left:0;top:297px;width:1119px;height:33px;background:#fafbfc;border-bottom:1px solid #ebedf0"></div>
<div class="ab" style="left:1120px;top:297px;width:518px;height:33px;background:#fafbfc;border-bottom:1px solid #ebedf0"></div>
<div class="t" style="left:0;top:303px;width:59px;text-align:center">10</div>
<div class="t" style="left:68px;top:303px">000013</div>
<div class="t" style="left:188px;top:303px">超品惠测试</div>
<div class="t" style="left:348px;top:303px">2198114</div>
<div class="t" style="left:606px;top:303px">【演示类】</div>
<div class="t" style="left:728px;top:303px">小炮12</div>
<div class="t" style="left:868px;top:303px">瓶</div>
<div class="t" style="left:986px;top:303px">【演示类】</div>
<div class="t" style="left:1173px;top:303px;width:60px;text-align:right">0.00</div>
<div class="t" style="left:1293px;top:303px;width:60px;text-align:right">0.00</div>
<div class="t" style="left:1413px;top:303px;width:60px;text-align:right">0.00</div>
<div class="t" style="left:1533px;top:303px;width:60px;text-align:right">0.00</div>
<div class="t" style="left:1653px;top:303px;width:60px;text-align:right">0.00</div>
<div class="ab" style="left:0;top:330px;width:1119px;height:33px;background:#fff;border-bottom:1px solid #ebedf0"></div>
<div class="ab" style="left:1120px;top:330px;width:518px;height:33px;background:#fff;border-bottom:1px solid #ebedf0"></div>
<div class="t" style="left:0;top:336px;width:59px;text-align:center">11</div>
<div class="t" style="left:68px;top:336px">000014</div>
<div class="t" style="left:188px;top:336px">6-14</div>
<div class="t" style="left:348px;top:336px">2198117</div>
<div class="t" style="left:606px;top:336px">【演示类】</div>
<div class="t" style="left:728px;top:336px">小炮12</div>
<div class="t" style="left:868px;top:336px">瓶</div>
<div class="t" style="left:986px;top:336px">【演示类】</div>
<div class="t" style="left:1173px;top:336px;width:60px;text-align:right">0.00</div>
<div class="t" style="left:1293px;top:336px;width:60px;text-align:right">0.00</div>
<div class="t" style="left:1413px;top:336px;width:60px;text-align:right">0.00</div>
<div class="t" style="left:1533px;top:336px;width:60px;text-align:right">0.00</div>
<div class="t" style="left:1653px;top:336px;width:60px;text-align:right">0.00</div>
<div class="ab" style="left:0;top:363px;width:1119px;height:33px;background:#fafbfc;border-bottom:1px solid #ebedf0"></div>
<div class="ab" style="left:1120px;top:363px;width:518px;height:33px;background:#fafbfc;border-bottom:1px solid #ebedf0"></div>
<div class="t" style="left:0;top:369px;width:59px;text-align:center">12</div>
<div class="t" style="left:68px;top:369px">000015</div>
<div class="t" style="left:188px;top:369px">6-15</div>
<div class="t" style="left:348px;top:369px">2198118</div>
<div class="t" style="left:606px;top:369px">【演示类】</div>
<div class="t" style="left:728px;top:369px">小炮12</div>
<div class="t" style="left:868px;top:369px">件</div>
<div class="t" style="left:986px;top:369px">【演示类】</div>
<div class="t" style="left:1173px;top:369px;width:60px;text-align:right">0.00</div>
<div class="t" style="left:1293px;top:369px;width:60px;text-align:right">0.00</div>
<div class="t" style="left:1413px;top:369px;width:60px;text-align:right">0.00</div>
<div class="t" style="left:1533px;top:369px;width:60px;text-align:right">0.00</div>
<div class="t" style="left:1653px;top:369px;width:60px;text-align:right">0.00</div>
<div class="ab" style="left:0;top:396px;width:1119px;height:33px;background:#fff;border-bottom:1px solid #ebedf0"></div>
<div class="ab" style="left:1120px;top:396px;width:518px;height:33px;background:#fff;border-bottom:1px solid #ebedf0"></div>
<div class="t" style="left:0;top:402px;width:59px;text-align:center">13</div>
<div class="t" style="left:68px;top:402px">000016</div>
<div class="t" style="left:188px;top:402px">2025年6月17日</div>
<div class="t" style="left:348px;top:402px">2198130</div>
<div class="t" style="left:606px;top:402px">【演示类】</div>
<div class="t" style="left:728px;top:402px">小炮12</div>
<div class="t" style="left:868px;top:402px">瓶</div>
<div class="t" style="left:986px;top:402px">【演示类】</div>
<div class="t" style="left:1173px;top:402px;width:60px;text-align:right">0.00</div>
<div class="t" style="left:1293px;top:402px;width:60px;text-align:right">0.00</div>
<div class="t" style="left:1413px;top:402px;width:60px;text-align:right">0.00</div>
<div class="t" style="left:1533px;top:402px;width:60px;text-align:right">0.00</div>
<div class="t" style="left:1653px;top:402px;width:60px;text-align:right">0.00</div>
<div class="ab" style="left:0;top:429px;width:1119px;height:33px;background:#fafbfc;border-bottom:1px solid #ebedf0"></div>
<div class="ab" style="left:1120px;top:429px;width:518px;height:33px;background:#fafbfc;border-bottom:1px solid #ebedf0"></div>
<div class="t" style="left:0;top:435px;width:59px;text-align:center">14</div>
<div class="t" style="left:68px;top:435px">000019</div>
<div class="t" style="left:188px;top:435px">jdl分级测试</div>
<div class="t" style="left:348px;top:435px">2198147</div>
<div class="t" style="left:606px;top:435px">【演示类】</div>
<div class="t" style="left:728px;top:435px">小炮12</div>
<div class="t" style="left:868px;top:435px">瓶</div>
<div class="t" style="left:986px;top:435px">【演示类】</div>
<div class="t" style="left:1173px;top:435px;width:60px;text-align:right">0.00</div>
<div class="t" style="left:1293px;top:435px;width:60px;text-align:right">0.00</div>
<div class="t" style="left:1413px;top:435px;width:60px;text-align:right">0.00</div>
<div class="t" style="left:1533px;top:435px;width:60px;text-align:right">0.00</div>
<div class="t" style="left:1653px;top:435px;width:60px;text-align:right">0.00</div>
<div class="ab" style="left:0;top:462px;width:1119px;height:33px;background:#fff;border-bottom:1px solid #ebedf0"></div>
<div class="ab" style="left:1120px;top:462px;width:518px;height:33px;background:#fff;border-bottom:1px solid #ebedf0"></div>
<div class="t" style="left:0;top:468px;width:59px;text-align:center">15</div>
<div class="t" style="left:68px;top:468px">00003</div>
<div class="t" style="left:188px;top:468px">猕猴桃汁</div>
<div class="t" style="left:348px;top:468px">2100003</div>
<div class="t" style="left:608px;top:468px">jzj1</div>
<div class="t" style="left:728px;top:468px">水果部门</div>
<div class="t" style="left:868px;top:468px">公斤</div>
<div class="t" style="left:988px;top:468px">水果类</div>
<div class="t" style="left:1173px;top:468px;width:60px;text-align:right">0.00</div>
<div class="t" style="left:1293px;top:468px;width:60px;text-align:right">0.00</div>
<div class="t" style="left:1413px;top:468px;width:60px;text-align:right">0.00</div>
<div class="t" style="left:1533px;top:468px;width:60px;text-align:right">0.00</div>
<div class="t" style="left:1653px;top:468px;width:60px;text-align:right">0.00</div>
</div>
<div class="ab" style="left:224px;top:782px;width:1638px;height:1px;background:#e6e8eb"></div>
<div class="ab" style="left:224px;top:815px;width:1638px;height:1px;background:#e6e8eb"></div>
<div class="t" style="left:1377px;top:789px;width:80px;text-align:right;font-weight:bold;-webkit-text-stroke-width:0;font-size:15px">1.00</div>
<div class="t" style="left:1497px;top:789px;width:80px;text-align:right;font-weight:bold;-webkit-text-stroke-width:0;font-size:15px">0.00</div>
<div class="t" style="left:1617px;top:789px;width:80px;text-align:right;font-weight:bold;-webkit-text-stroke-width:0;font-size:15px">50.00</div>
<div class="t" style="left:1737px;top:789px;width:80px;text-align:right;font-weight:bold;-webkit-text-stroke-width:0;font-size:15px">0.00</div>
<div class="ab" style="left:224px;top:816px;width:1119px;height:13px;background:#f8f8f9"></div>
<div class="ab" style="left:1344px;top:816px;width:518px;height:13px;background:#f8f8f9"></div>
<svg style="left:227px;top:818px" width="6" height="9"><path d="M6 0V9L0 4.5Z" fill="#8c8c8c"/></svg>
<svg style="left:1334px;top:818px" width="6" height="9"><path d="M0 0V9L6 4.5Z" fill="#8c8c8c"/></svg>
<svg style="left:1348px;top:818px" width="6" height="9"><path d="M6 0V9L0 4.5Z" fill="#8c8c8c"/></svg>
<svg style="left:1853px;top:818px" width="6" height="9"><path d="M0 0V9L6 4.5Z" fill="#8c8c8c"/></svg>
<div class="ab" style="left:1378px;top:819px;width:30px;height:7px;border-radius:4px;background:#8c8c8c"></div>
<div class="ab" style="left:1862px;top:307px;width:13px;height:522px;background:#fafafa"></div>
<svg style="left:1864px;top:313px" width="10" height="6"><path d="M0 5.5H9.5L4.75 0Z" fill="#8c8c8c"/></svg>
<svg style="left:1864px;top:772px" width="10" height="6"><path d="M0 0H9.5L4.75 5.5Z" fill="#8c8c8c"/></svg>
<svg style="left:1864px;top:788px" width="10" height="6"><path d="M0 5.5H9.5L4.75 0Z" fill="#8c8c8c"/></svg>
<svg style="left:1864px;top:806px" width="10" height="6"><path d="M0 0H9.5L4.75 5.5Z" fill="#8c8c8c"/></svg>
<div class="ab" style="left:1865px;top:323px;width:7px;height:32px;border-radius:4px;background:#8c8c8c"></div>
<div class="ab" style="left:1875px;top:241px;width:1px;height:588px;background:#e6e8eb"></div>
<div class="ab" style="left:1876px;top:241px;width:20px;height:588px;background:#f9fafb"></div>
<div class="ab" style="left:1876px;top:300px;width:20px;height:1px;background:#e6e8eb"></div>
<svg style="left:1881px;top:257px" width="10" height="9" viewBox="0 0 10 9"><rect x="0.6" y="0.6" width="8.8" height="7.8" fill="none" stroke="#111" stroke-width="1.2"/><path d="M0.6 2.2H9.4" stroke="#111" stroke-width="2"/><path d="M3.5 2V8.5 M6.5 2V8.5" stroke="#111" stroke-width="1.1"/></svg>
<div class="t" style="left:1879px;top:269px;font-size:13px">列</div>
<div class="ab" style="left:1890px;top:314px;width:29px;height:119px;background:#b3c3fb;border-radius:5px 0 0 5px"></div>
<svg style="left:1898px;top:323px" width="14" height="12" viewBox="0 0 14 12"><path d="M1 1H13V9H8L7 10.5L6 9H1Z" fill="none" stroke="#fff" stroke-width="1.3" stroke-linejoin="round"/><path d="M4 4H10 M4 6.3H8" stroke="#fff" stroke-width="1.2"/></svg>
<div class="t" style="left:1898px;top:340px;font-size:13px;color:#fff;font-weight:bold;-webkit-text-stroke-width:0">帮</div>
<div class="t" style="left:1898px;top:362px;font-size:13px;color:#fff;font-weight:bold;-webkit-text-stroke-width:0">助</div>
<div class="t" style="left:1898px;top:384px;font-size:13px;color:#fff;font-weight:bold;-webkit-text-stroke-width:0">中</div>
<div class="t" style="left:1898px;top:406px;font-size:13px;color:#fff;font-weight:bold;-webkit-text-stroke-width:0">心</div>
<div class="ab" style="left:1890px;top:444px;width:32px;height:119px;background:#fff;border-radius:5px 0 0 5px;box-shadow:0 1px 5px rgba(0,0,0,0.12)"></div>
<svg style="left:1897px;top:472px" width="17" height="17" viewBox="0 0 17 17"><path d="M2.5 9V7.5C2.5 4 5 1.5 8.5 1.5C12 1.5 14.5 4 14.5 7.5V9" fill="none" stroke="#555" stroke-width="1.4"/><rect x="0.8" y="8" width="2.5" height="4" rx="1" fill="#555"/><rect x="13.7" y="8" width="2.5" height="4" rx="1" fill="#555"/><path d="M14.5 12C14 14.5 12 15.5 9 15.5" fill="none" stroke="#555" stroke-width="1.3"/><path d="M6.5 11.5C7.5 12.3 9.5 12.3 10.5 11.5" fill="none" stroke="#555" stroke-width="1.3"/></svg>
<div class="t" style="left:1898px;top:492px;font-size:13px">客</div>
<div class="t" style="left:1898px;top:514px;font-size:13px">服</div>
<div class="t" style="left:1507px;top:843px">共557条</div>
<svg style="left:1577px;top:848px" width="7" height="11" viewBox="0 0 7 11"><path d="M6 1L1.5 5.5L6 10" fill="none" stroke="#c0c4cc" stroke-width="1.3"/></svg>
<div class="ab" style="left:1592px;top:841px;width:24px;height:24px;border-radius:3px;background:#2468f2;color:#fff;font-size:13px;line-height:24px;text-align:center">1</div>
<div class="t" style="left:1616px;top:844px;width:24px;text-align:center;font-size:12px">2</div>
<div class="t" style="left:1640px;top:844px;width:24px;text-align:center;font-size:12px">3</div>
<svg style="left:1673px;top:848px" width="7" height="11" viewBox="0 0 7 11"><path d="M1 1L5.5 5.5L1 10" fill="none" stroke="#333" stroke-width="1.3"/></svg>
<div class="ipt" style="left:1690px;top:841px;width:96px;height:24px;border-radius:3px"></div>
<div class="t" style="left:1697px;top:843px">200 条/页</div>
<svg style="left:1767px;top:850px" width="11" height="7" viewBox="0 0 11 7"><path d="M0.7 0.7L5.5 5.5L10.3 0.7" fill="none" stroke="#777" stroke-width="1.4"/></svg>
<div class="t" style="left:1794px;top:843px">跳至</div>
<div class="ipt" style="left:1830px;top:841px;width:44px;height:24px;border-radius:3px"></div>
<div class="t" style="left:1882px;top:843px">页</div>
<div class="ab" style="left:1602px;top:758px;width:131px;height:68px;border:5px solid #fd3a3a;border-radius:6px"></div>
</body></html>
